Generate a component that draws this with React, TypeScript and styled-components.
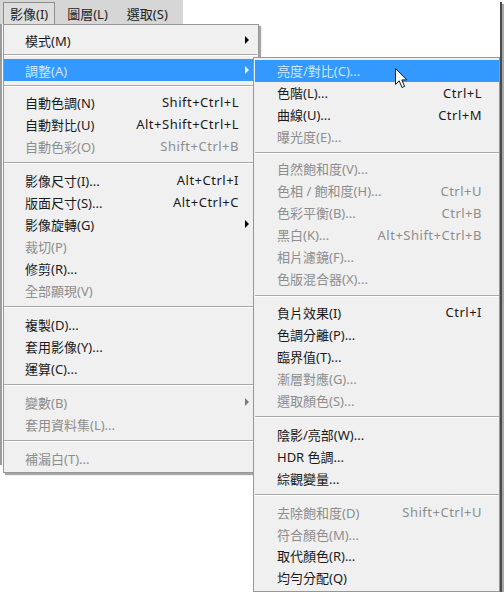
import * as React from 'react';
import styled, { createGlobalStyle } from 'styled-components';

const GlobalStyle = createGlobalStyle`
  html, body {
    margin: 0;
    padding: 0;
    background: #ffffff;
  }
  body {
    font-family: "Noto Sans", "Noto Sans CJK TC", sans-serif;
    font-size: 13px;
    color: #1a1a1a;
  }
`;

type Item =
  | { sep: true; h?: number }
  | {
      sep?: false;
      label: string;
      shortcut?: string;
      sub?: boolean;
      disabled?: boolean;
      active?: boolean;
    };

const mainItems: Item[] = [
  { label: '模式(M)', sub: true },
  { sep: true, h: 8 },
  { label: '調整(A)', sub: true, active: true },
  { sep: true, h: 10 },
  { label: '自動色調(N)', shortcut: 'Shift+Ctrl+L' },
  { label: '自動對比(U)', shortcut: 'Alt+Shift+Ctrl+L' },
  { label: '自動色彩(O)', shortcut: 'Shift+Ctrl+B', disabled: true },
  { sep: true },
  { label: '影像尺寸(I)...', shortcut: 'Alt+Ctrl+I' },
  { label: '版面尺寸(S)...', shortcut: 'Alt+Ctrl+C' },
  { label: '影像旋轉(G)', sub: true },
  { label: '裁切(P)', disabled: true },
  { label: '修剪(R)...' },
  { label: '全部顯現(V)', disabled: true },
  { sep: true },
  { label: '複製(D)...' },
  { label: '套用影像(Y)...' },
  { label: '運算(C)...' },
  { sep: true },
  { label: '變數(B)', sub: true, disabled: true },
  { label: '套用資料集(L)...', disabled: true },
  { sep: true },
  { label: '補漏白(T)...', disabled: true },
];

const adjustItems: Item[] = [
  { label: '亮度/對比(C)...', active: true },
  { label: '色階(L)...', shortcut: 'Ctrl+L' },
  { label: '曲線(U)...', shortcut: 'Ctrl+M' },
  { label: '曝光度(E)...', disabled: true },
  { sep: true, h: 10 },
  { label: '自然飽和度(V)...', disabled: true },
  { label: '色相 / 飽和度(H)...', shortcut: 'Ctrl+U', disabled: true },
  { label: '色彩平衡(B)...', shortcut: 'Ctrl+B', disabled: true },
  { label: '黑白(K)...', shortcut: 'Alt+Shift+Ctrl+B', disabled: true },
  { label: '相片濾鏡(F)...', disabled: true },
  { label: '色版混合器(X)...', disabled: true },
  { sep: true },
  { label: '負片效果(I)', shortcut: 'Ctrl+I' },
  { label: '色調分離(P)...' },
  { label: '臨界值(T)...' },
  { label: '漸層對應(G)...', disabled: true },
  { label: '選取顏色(S)...', disabled: true },
  { sep: true },
  { label: '陰影/亮部(W)...' },
  { label: 'HDR 色調...' },
  { label: '綜觀變量...' },
  { sep: true },
  { label: '去除飽和度(D)', shortcut: 'Shift+Ctrl+U', disabled: true },
  { label: '符合顏色(M)...', disabled: true },
  { label: '取代顏色(R)...' },
  { label: '均勻分配(Q)' },
];

const Frame = styled.div`
  position: relative;
  width: 500px;
  height: 592px;
  background: #ffffff;
  box-shadow: 2px 2px 0 #4a4a4a, 4px 4px 0 #a8a8a8;
`;

const MenuBar = styled.nav`
  display: flex;
  align-items: stretch;
  gap: 5px;
  width: 180px;
  height: 24px;
  padding-left: 3px;
  background: #d6d6d6;
`;

const BarItem = styled.div<{ $open?: boolean }>`
  display: flex;
  align-items: center;
  margin-top: 2px;
  padding: 0 6px 1px;
  border: 1px solid ${(p) => (p.$open ? '#8c8c8c' : 'transparent')};
  border-bottom: none;
  background: ${(p) => (p.$open ? '#dedede' : 'transparent')};
  color: #222;
`;

// window edge peeking out behind the open menu
const BackEdge = styled.div`
  position: absolute;
  left: 0;
  top: 24px;
  width: 2px;
  height: 441px;
  background: #9c9c9c;
`;

const Menu = styled.div<{ $left: number; $top: number; $width: number; $bottom?: number }>`
  position: absolute;
  left: ${(p) => p.$left}px;
  top: ${(p) => p.$top}px;
  width: ${(p) => p.$width}px;
  ${(p) => (p.$bottom !== undefined ? `bottom: ${p.$bottom}px;` : '')}
  box-sizing: border-box;
  display: flex;
  flex-direction: column;
  background: #f0f0f0;
  border: 1px solid #979797;
  box-shadow: 2px 2px 1px rgba(0, 0, 0, 0.35);
`;

const MainMenu = styled(Menu)`
  padding: 4px 1px 3px 0;
`;

const SubMenu = styled(Menu)`
  padding: 2px 0 2px 1px;
  box-shadow: none;
`;

const Row = styled.div<{ $active?: boolean; $disabled?: boolean; $indent: number }>`
  display: flex;
  align-items: center;
  height: 22px;
  padding-left: ${(p) => p.$indent}px;
  background: ${(p) => (p.$active ? '#3399ff' : 'transparent')};
  color: ${(p) => (p.$active ? '#d2e7ff' : p.$disabled ? '#8d8d8d' : '#1a1a1a')};
  white-space: nowrap;
`;

const Label = styled.span`
  flex: 1;
`;

const Shortcut = styled.span`
  text-align: right;
  letter-spacing: 0.5px;
`;

const ArrowCell = styled.span<{ $w: number }>`
  display: flex;
  align-items: center;
  width: ${(p) => p.$w}px;
  padding-left: 6px;
  box-sizing: border-box;
`;

const Triangle = styled.span<{ $color: string }>`
  width: 0;
  height: 0;
  border-top: 4px solid transparent;
  border-bottom: 4px solid transparent;
  border-left: 4px solid ${(p) => p.$color};
`;

const Separator = styled.div<{ $h: number }>`
  display: flex;
  flex-direction: column;
  justify-content: center;
  height: ${(p) => p.$h}px;

  &::before {
    content: '';
    height: 1px;
    background: #a9a9a9;
  }
  &::after {
    content: '';
    height: 1px;
    background: #ffffff;
  }
`;

const Cursor = styled.svg`
  position: absolute;
  left: 395px;
  top: 68px;
`;

const MenuList = ({ items, indent, arrowW }: { items: Item[]; indent: number; arrowW: number }) => (
  <>
    {items.map((it, i) => {
      if (it.sep) return <Separator key={i} $h={it.h ?? 12} />;
      const arrowColor = it.active ? '#e6f1ff' : it.disabled ? '#7a7a7a' : '#000';
      return (
        <Row key={i} $active={it.active} $disabled={it.disabled} $indent={indent}>
          <Label>{it.label}</Label>
          {it.shortcut && <Shortcut>{it.shortcut}</Shortcut>}
          <ArrowCell $w={arrowW}>{it.sub && <Triangle $color={arrowColor} />}</ArrowCell>
        </Row>
      );
    })}
  </>
);

const App = () => (
  <>
    <GlobalStyle />
    <Frame>
      <MenuBar>
        <BarItem $open>影像(I)</BarItem>
        <BarItem>圖層(L)</BarItem>
        <BarItem>選取(S)</BarItem>
      </MenuBar>

      <BackEdge />

      <MainMenu $left={3} $top={24} $width={256}>
        <MenuList items={mainItems} indent={21} arrowW={18} />
      </MainMenu>

      <SubMenu $left={253} $top={57} $width={247} $bottom={0}>
        <MenuList items={adjustItems} indent={22} arrowW={17} />
      </SubMenu>

      <Cursor width="14" height="22" viewBox="0 0 14 22">
        <path
          d="M0.5 0.5 L0.5 16.5 L4.2 12.8 L7 19.5 L9.6 18.4 L6.8 11.9 L11.8 11.9 Z"
          fill="#ffffff"
          stroke="#1a1a1a"
          strokeWidth="1"
          strokeLinejoin="round"
        />
      </Cursor>
    </Frame>
  </>
);

export default App;
